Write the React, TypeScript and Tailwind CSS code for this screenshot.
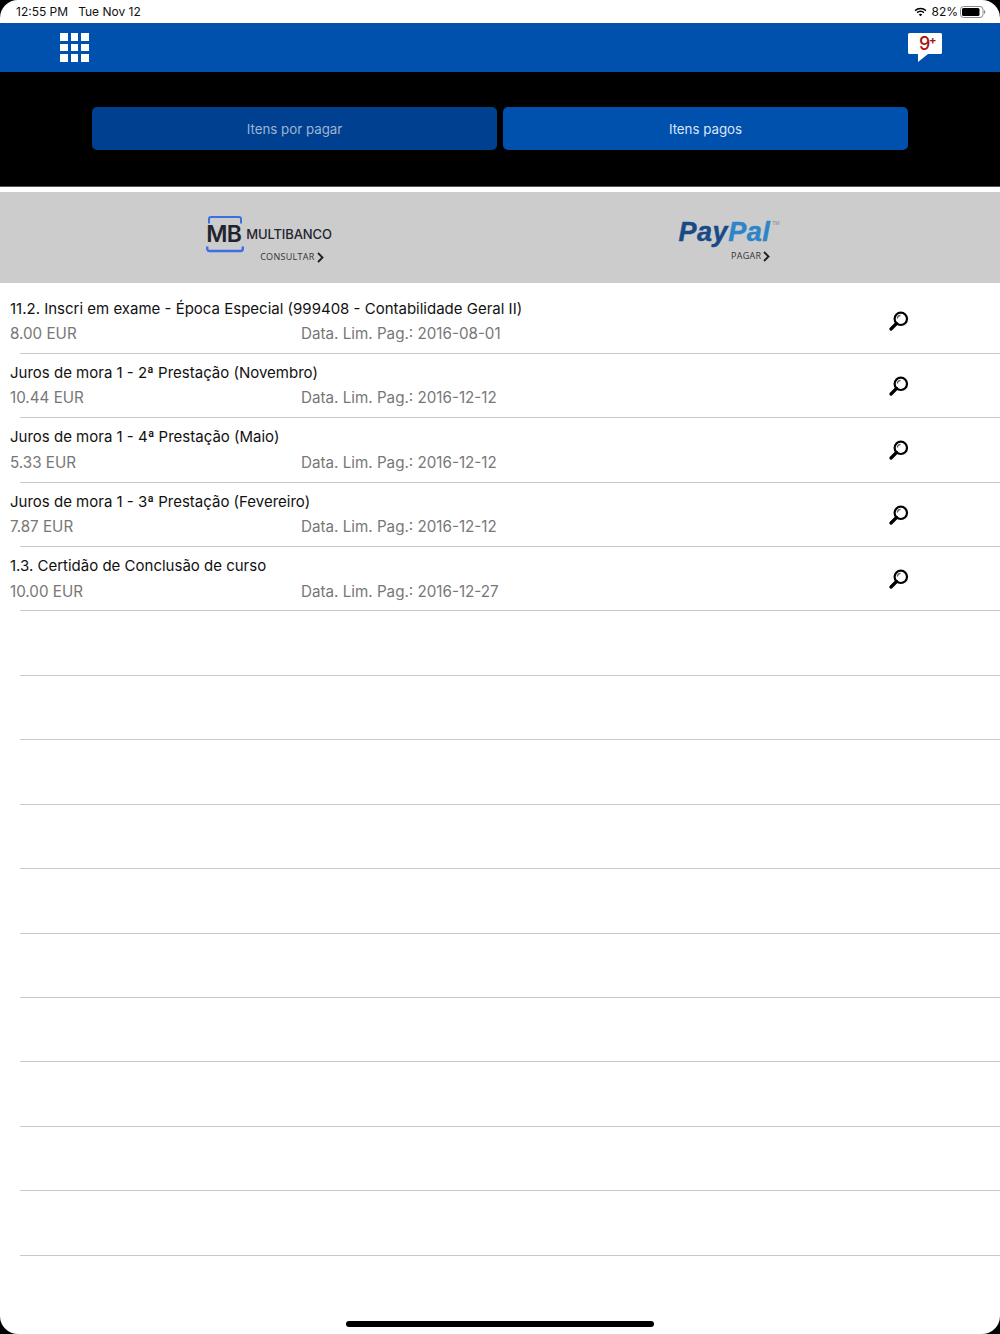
const items = [
  { title: "11.2. Inscri em exame - Época Especial (999408 - Contabilidade Geral II)", amount: "8.00 EUR", date: "Data. Lim. Pag.: 2016-08-01" },
  { title: "Juros de mora 1 - 2ª Prestação (Novembro)", amount: "10.44 EUR", date: "Data. Lim. Pag.: 2016-12-12" },
  { title: "Juros de mora 1 - 4ª Prestação (Maio)", amount: "5.33 EUR", date: "Data. Lim. Pag.: 2016-12-12" },
  { title: "Juros de mora 1 - 3ª Prestação (Fevereiro)", amount: "7.87 EUR", date: "Data. Lim. Pag.: 2016-12-12" },
  { title: "1.3. Certidão de Conclusão de curso", amount: "10.00 EUR", date: "Data. Lim. Pag.: 2016-12-27" },
];

function Wifi() {
  return (
    <svg width="13" height="10" viewBox="0 0 15 11" className="block">
      <path d="M7.500 2.200c2.200 0 4.200.9 5.700 2.300l1.100-1.200A9.900 9.900 0 0 0 7.500.6 9.900 9.900 0 0 0 .7 3.300l1.100 1.200a8.200 8.200 0 0 1 5.700-2.300z" fill="#000" />
      <path d="M7.500 5.500c1.300 0 2.500.5 3.400 1.300l1.100-1.200a6.600 6.600 0 0 0-9 0l1.100 1.200c.9-.8 2.100-1.300 3.400-1.300z" fill="#000" />
      <path d="M7.500 10.500l2-2.200a3 3 0 0 0-4 0z" fill="#000" />
    </svg>
  );
}

function Battery() {
  return (
    <svg width="26" height="12" viewBox="0 0 26 12" className="block">
      <rect x="0.500" y="0.500" width="22.500" height="11" rx="3" fill="none" stroke="#8a8a8a" />
      <rect x="2" y="2" width="17.500" height="8" rx="1.500" fill="#000" />
      <path d="M24 4v4c.8-.3 1.300-1.100 1.300-2s-.5-1.700-1.300-2z" fill="#8a8a8a" />
    </svg>
  );
}

function GridIcon() {
  return (
    <div className="grid grid-cols-3 gap-[3px] w-[29px]">
      {Array.from({ length: 9 }).map((_, i) => (
        <div key={i} className="h-[7.670px] bg-white" />
      ))}
    </div>
  );
}

function Badge() {
  return (
    <div className="relative w-[34px] h-[29px]">
      <svg width="34" height="29" viewBox="0 0 34 29" className="block">
        <path d="M1.500 0h31A1.500 1.500 0 0 1 34 1.500v18a1.500 1.500 0 0 1-1.500 1.500H20l-10 8v-8H1.500A1.500 1.500 0 0 1 0 19.500v-18A1.500 1.500 0 0 1 1.500 0z" fill="#fff" />
      </svg>
      <span className="absolute left-[11px] top-[1px] text-[18px] leading-[20px] font-medium text-[#a80f17] font-['Inter',sans-serif]">9</span>
      <span className="absolute left-[21px] top-[2px] text-[11px] leading-[11px] font-bold text-[#a80f17] font-['Inter',sans-serif]">+</span>
    </div>
  );
}

function Chevron() {
  return (
    <svg width="7" height="11" viewBox="0 0 7 11" className="block">
      <path d="M1 1l4.500 4.500L1 10" fill="none" stroke="#222" strokeWidth="1.900" />
    </svg>
  );
}

function MultibancoLogo() {
  return (
    <div className="flex flex-col">
      <div className="flex items-center">
        <div className="relative w-[38px] h-[37px]">
          <svg width="38" height="37" viewBox="0 0 38 37" className="absolute left-0 top-0">
            <path d="M3 7.500V3a2 2 0 0 1 2-2h28a2 2 0 0 1 2 2v4.500" fill="none" stroke="#3a70e2" strokeWidth="2" />
            <path d="M1.200 30.500v2.300a2.200 2.200 0 0 0 2.200 2.200h31.200a2.200 2.200 0 0 0 2.200-2.200v-2.300" fill="none" stroke="#3a70e2" strokeWidth="2.400" />
          </svg>
          <span className="absolute left-[0px] top-[6px] text-[23px] leading-[24px] font-semibold tracking-[-0.500px] text-[#1f2430] font-['Inter',sans-serif]">MB</span>
        </div>
        <span className="ml-[2px] -mt-[2px] text-[13px] leading-[16px] font-medium tracking-[-0.100px] text-[#1f2430] font-['Inter',sans-serif]">MULTIBANCO</span>
      </div>
      <div className="flex items-center gap-[2px] ml-[54px] -mt-[2px]">
        <span className="text-[9px] leading-[12px] tracking-[0.300px] text-[#333] font-['Open_Sans',sans-serif]">CONSULTAR</span>
        <Chevron />
      </div>
    </div>
  );
}

function PayPalLogo() {
  return (
    <div className="flex flex-col items-end">
      <div className="flex items-start">
        <span className="text-[27px] leading-[32px] font-bold italic tracking-[0.500px] [-webkit-text-stroke:0.4px_#184a86] text-[#184a86] font-['Liberation_Sans',sans-serif]">Pay</span>
        <span className="text-[27px] leading-[32px] font-bold italic tracking-[0.500px] [-webkit-text-stroke:0.4px_#2b85c8] text-[#2b85c8] font-['Liberation_Sans',sans-serif]">Pal</span>
        <span className="ml-[2px] text-[5px] leading-[14px] text-[#888] font-['Liberation_Sans',sans-serif]">TM</span>
      </div>
      <div className="flex items-center gap-[2px] mr-[9px] mt-[2px]">
        <span className="text-[9px] leading-[12px] tracking-[0.300px] text-[#333] font-['Open_Sans',sans-serif]">PAGAR</span>
        <Chevron />
      </div>
    </div>
  );
}

function SearchIcon() {
  return (
    <svg width="20" height="20" viewBox="0 0 20 20" className="block">
      <circle cx="11.800" cy="7.800" r="6.200" fill="none" stroke="#000" strokeWidth="2.200" />
      <path d="M7.500 12.500L2 18" fill="none" stroke="#000" strokeWidth="3.200" strokeLinecap="round" />
      <path d="M8.300 7.500a3.500 3.500 0 0 1 3.200-3.200" fill="none" stroke="#555" strokeWidth="1.200" />
    </svg>
  );
}

export default function App() {
  return (
    <div className="w-[1000px] h-[1334px] bg-black">
      <div className="w-full h-full bg-white rounded-[18px] overflow-hidden flex flex-col font-['Inter','Liberation_Sans',sans-serif]">
        <div className="h-[23px] flex items-center justify-between pl-[16px] pr-[14px] text-[12px] text-[#111]">
          <div className="flex gap-[10px]">
            <span>12:55 PM</span>
            <span>Tue Nov 12</span>
          </div>
          <div className="flex items-center">
            <Wifi />
            <span className="ml-[4px] mr-[2px]">82%</span>
            <Battery />
          </div>
        </div>
        <div className="h-[49px] bg-[#0050ae] flex items-center justify-between pl-[60px] pr-[58px]">
          <GridIcon />
          <Badge />
        </div>
        <div className="h-[115px] bg-black flex items-center justify-center gap-[6px] pb-[2px] border-b border-[#555]">
          <button className="w-[405px] h-[43px] pt-[4px] rounded-[5px] bg-[#004090] text-[13.300px] text-[#9db4d4]">Itens por pagar</button>
          <button className="w-[405px] h-[43px] pt-[4px] rounded-[5px] bg-[#0050ae] text-[13.300px] text-[#dbe6f5]">Itens pagos</button>
        </div>
        <div className="h-[5px] bg-white" />
        <div className="h-[91px] bg-[#cccccc] flex items-start">
          <div className="w-[500px] flex justify-center pt-[24px] pl-[38px]">
            <MultibancoLogo />
          </div>
          <div className="w-[500px] flex justify-center pt-[24px]">
            <div className="ml-[-42px]">
              <PayPalLogo />
            </div>
          </div>
        </div>
        <div className="flex flex-col">
          {items.map((it, i) => (
            <div key={i} className={`relative flex pl-[10px] ${i === 0 ? "h-[70.800px] pt-[15.500px]" : "h-[64.430px] pt-[9px]"}`}>
              <div className="flex-1 min-w-0">
                <div className="text-[15px] leading-[20px] text-[#111]">{it.title}</div>
                <div className="flex mt-[5.500px] text-[15.200px] leading-[20px] text-[#777]">
                  <span className="w-[291px]">{it.amount}</span>
                  <span>{it.date}</span>
                </div>
              </div>
              <div className={`w-[111px] ${i === 0 ? "pt-[12.500px]" : "pt-[13px]"}`}>
                <SearchIcon />
              </div>
              <div className="absolute left-[20px] right-0 bottom-0 h-px bg-[#c8c8c8]" />
            </div>
          ))}
          {Array.from({ length: 10 }).map((_, i) => (
            <div key={i} className="h-[64.430px] ml-[20px] border-b border-[#c8c8c8]" />
          ))}
        </div>
        <div className="flex-1 flex items-end justify-center pb-[7px]">
          <div className="w-[308px] h-[6px] rounded-full bg-black" />
        </div>
      </div>
    </div>
  );
}
